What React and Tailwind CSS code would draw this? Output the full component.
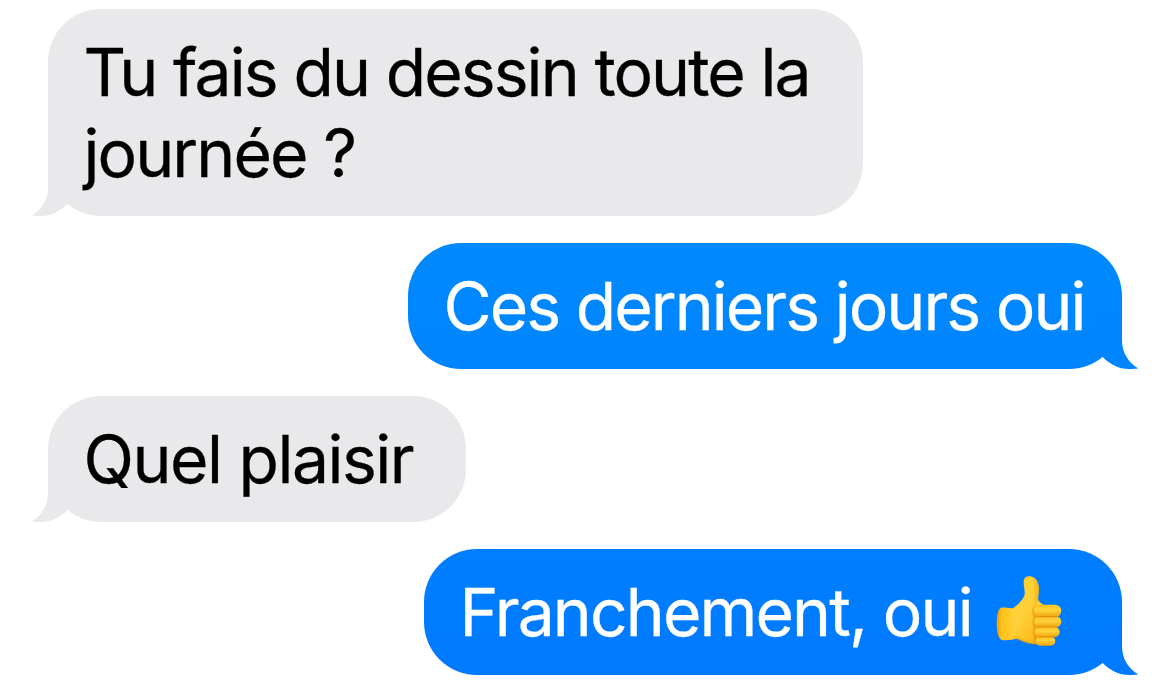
const messages = [
  {
    id: 1,
    from: 'them',
    lines: ['Tu fais du dessin toute la', 'journée ?'],
    bubble: 'w-[815px] bg-[#e9e9eb] text-black',
    tail: 'text-[#e9e9eb]',
    tracking: 'tracking-[-1.91px]'
  },
  {
    id: 2,
    from: 'me',
    lines: ['Ces derniers jours oui'],
    bubble: 'w-[714px] bg-linear-to-b from-[#008aff] to-[#0084ff] text-white',
    tail: 'text-[#0085ff]',
    tracking: 'tracking-[-1.95px]'
  },
  {
    id: 3,
    from: 'them',
    lines: ['Quel plaisir'],
    bubble: 'w-[418px] bg-[#e9e9eb] text-black',
    tail: 'text-[#e9e9eb]',
    tracking: 'tracking-[-1.5px]'
  },
  {
    id: 4,
    from: 'me',
    lines: ['Franchement, oui'],
    thumb: true,
    bubble: 'w-[698px] bg-linear-to-b from-[#007eff] to-[#007aff] text-white',
    tail: 'text-[#007bff]',
    tracking: 'tracking-[-1.87px]'
  }
];

function Tail({ side, className }) {
  const position = side === 'me' ? '-right-4 -scale-x-100' : '-left-4';

  return (
    <svg
      className={`absolute bottom-0 ${position} ${className}`}
      width="40"
      height="56"
      viewBox="0 0 40 56"
      fill="currentColor"
    >
      <path d="M16 3V27C16 40 9.500 49.500 0 55.200C1.500 55.800 4 56 9 56C19 56 28 51.500 35.300 44L40 30V3Z" />
    </svg>
  );
}

function ThumbsUp() {
  return (
    <svg className="-mt-1 ml-[23.5px] shrink-0" width="68" height="72" viewBox="46 44 204 216" role="img" aria-label="👍">
      <defs>
        <linearGradient id="hand" x1="0" y1="0" x2="0.7" y2="1">
          <stop offset="0" stopColor="#ffd02f" />
          <stop offset="0.55" stopColor="#ffd039" />
          <stop offset="1" stopColor="#fdb714" />
        </linearGradient>
        <linearGradient id="wrist" x1="0" y1="0" x2="1" y2="0">
          <stop offset="0" stopColor="#ef9c08" />
          <stop offset="0.25" stopColor="#ffc31c" />
          <stop offset="1" stopColor="#ffd039" />
        </linearGradient>
        <linearGradient id="finger" x1="0" y1="0" x2="0" y2="1">
          <stop offset="0" stopColor="#ffc51c" />
          <stop offset="0.45" stopColor="#ffd23b" />
          <stop offset="1" stopColor="#f2a30b" />
        </linearGradient>
        <linearGradient id="thumb" x1="0" y1="0" x2="1" y2="0">
          <stop offset="0.6" stopColor="#e99c08" stopOpacity="0" />
          <stop offset="1" stopColor="#e99c08" stopOpacity="0.6" />
        </linearGradient>
        <filter id="soft" x="-30%" y="-30%" width="160%" height="160%">
          <feGaussianBlur stdDeviation="3" />
        </filter>
      </defs>
      {/* Wrist */}
      <path d="M64 142C80 141 94 145 106 144L118 234C102 236 86 242 66 239C56 234 51 214 51 190C51 165 56 145 64 142Z" fill="url(#wrist)" />
      {/* Palm and thumb */}
      <path d="M97 145C112 137 128 120 134 106C138 94 131 77 132 62C133 51 142 46 152 48C168 50 178 66 178 86C178 99 174 109 176 119C180 127 188 132 197 136L202 251C170 253 143 250 124 240C116 236 112 234 103 232C96 206 92 170 97 145Z" fill="url(#hand)" />
      <path d="M134 106C138 94 131 77 132 62C133 51 142 46 152 48C168 50 178 66 178 86C178 99 174 109 176 119L165 140H128Z" fill="url(#thumb)" />
      <path d="M104 229C120 238 138 248 166 249" fill="none" stroke="#ef9608" strokeWidth="5" opacity="0.65" filter="url(#soft)" />
      <path d="M167 140C160 153 162 162 168 169C162 181 163 194 169 201C164 210 164 222 170 230C166 238 168 246 172 250" fill="none" stroke="#d97e00" strokeWidth="7" opacity="0.7" filter="url(#soft)" />
      {/* Fingers */}
      <rect x="168" y="228" width="59" height="28" rx="14" fill="url(#finger)" />
      <rect x="165" y="199" width="75" height="31" rx="15.500" fill="url(#finger)" />
      <rect x="164" y="167" width="81" height="34" rx="17" fill="url(#finger)" />
      <rect x="162" y="133" width="83" height="37" rx="18.500" fill="url(#finger)" />
      <path d="M173 169H233M174 200H232M176 230H224" stroke="#d98205" strokeWidth="3" strokeLinecap="round" opacity="0.8" />
    </svg>
  );
}

function Message({ message }) {
  const mine = message.from === 'me';

  return (
    <div className={`flex ${mine ? 'justify-end' : 'justify-start'}`}>
      <div className={`relative rounded-[53px] pt-[23px] pb-[22px] pl-[35.5px] ${message.bubble}`}>
        <Tail side={message.from} className={message.tail} />
        <div className="relative flex items-center">
          <p className={`text-[66px] leading-[81px] whitespace-nowrap [-webkit-text-stroke:0.3px_currentColor] ${message.tracking}`}>
            {message.lines.map((line) => (
              <span key={line} className="block">{line}</span>
            ))}
          </p>
          {message.thumb && <ThumbsUp />}
        </div>
      </div>
    </div>
  );
}

export default function App() {
  return (
    <main className="flex h-[688px] w-[1170px] flex-col gap-[27px] overflow-hidden bg-white pt-[9px] pr-12 pl-12 font-['Inter',sans-serif]">
      {messages.map((message) => (
        <Message key={message.id} message={message} />
      ))}
    </main>
  );
}
